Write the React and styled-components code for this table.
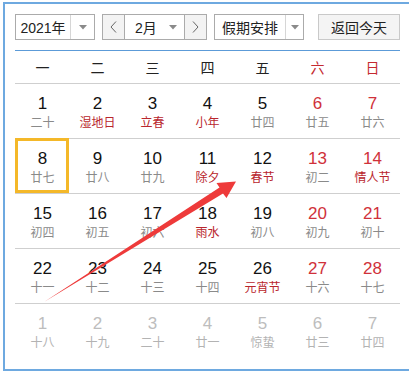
import React from 'react'
import styled, { createGlobalStyle } from 'styled-components'

const GlobalStyle = createGlobalStyle`
    body {
        margin: 0;
        background: #fff;
        overflow: hidden;
        font-family: "Liberation Sans", "Noto Sans CJK SC", sans-serif;
    }
`

const weekdays = ['一', '二', '三', '四', '五', '六', '日']

const weeks = [
    [['1', '二十'], ['2', '湿地日', 1], ['3', '立春', 1], ['4', '小年', 1], ['5', '廿四'], ['6', '廿五'], ['7', '廿六']],
    [['8', '廿七'], ['9', '廿八'], ['10', '廿九'], ['11', '除夕', 1], ['12', '春节', 1], ['13', '初二'], ['14', '情人节', 1]],
    [['15', '初四'], ['16', '初五'], ['17', '初六'], ['18', '雨水', 1], ['19', '初八'], ['20', '初九'], ['21', '初十']],
    [['22', '十一'], ['23', '十二'], ['24', '十三'], ['25', '十四'], ['26', '元宵节', 1], ['27', '十六'], ['28', '十七']],
    [['1', '十八'], ['2', '十九'], ['3', '二十'], ['4', '廿一'], ['5', '惊蛰'], ['6', '廿三'], ['7', '廿四']],
]

function Caret() {
    return (
        <svg width="8" height="5" viewBox="0 0 8 5">
            <path d="M0 0 L8 0 L4 4.5 Z" fill="#8a8a8a" />
        </svg>
    )
}

function Chevron({ dir }) {
    return (
        <svg width="7" height="12" viewBox="0 0 7 12">
            <path d={dir === 'left' ? 'M6 0.5 L1 6 L6 11.5' : 'M1 0.5 L6 6 L1 11.5'} fill="none" stroke="#666" strokeWidth="1" />
        </svg>
    )
}

function App() {
    return (
        <>
            <GlobalStyle />
            <Frame>
                <Toolbar>
                    <Select>
                        <SelectText $w={54}>2021年</SelectText>
                        <CaretBox $w={24} $divider>
                            <Caret />
                        </CaretBox>
                    </Select>
                    <Select>
                        <StepButton><Chevron dir="left" /></StepButton>
                        <SelectText $w={37} $left>2月</SelectText>
                        <CaretBox $w={22}>
                            <Caret />
                        </CaretBox>
                        <StepButton $right><Chevron dir="right" /></StepButton>
                    </Select>
                    <Select>
                        <SelectText $w={70}>假期安排</SelectText>
                        <CaretBox $w={18} $divider>
                            <Caret />
                        </CaretBox>
                    </Select>
                    <TodayButton>返回今天</TodayButton>
                </Toolbar>
                <Calendar>
                    <WeekHeader>
                        {weekdays.map((d, i) => (
                            <WeekDay key={d} $weekend={i > 4}>{d}</WeekDay>
                        ))}
                    </WeekHeader>
                    {weeks.map((week, r) => (
                        <WeekRow key={r} $last={r === weeks.length - 1}>
                            {week.map(([num, lunar, fest], c) => (
                                <DayCell key={c} $selected={r === 1 && c === 0}>
                                    <DayNum $weekend={c > 4} $other={r === 4}>{num}</DayNum>
                                    <Lunar $fest={fest} $other={r === 4}>{lunar}</Lunar>
                                </DayCell>
                            ))}
                        </WeekRow>
                    ))}
                </Calendar>
                <Arrow viewBox="0 0 409 373" width="409" height="373">
                    <polygon
                        points="44,302 219.5,187.5 216.5,183 236,181.5 226.5,198 223,193.5"
                        fill="#ee3a3a"
                    />
                </Arrow>
            </Frame>
        </>
    )
}

const Frame = styled.div`
    position: relative;
    margin: 2px 0 0 3px;
    width: 406px;
    border: 2px solid #6ea9e0;
    border-right: none;
    padding: 10px 0 10px 10px;
    box-sizing: border-box;
    height: 369px;
`

const Toolbar = styled.div`
    display: flex;
    align-items: center;
    height: 26px;
    gap: 7px;
    & > :last-child {
        margin-left: 7px;
    }
`

const Select = styled.div`
    display: flex;
    height: 26px;
    border: 1px solid #ababab;
    box-sizing: border-box;
    background: #fff;
`

const SelectText = styled.div`
    width: ${p => p.$w}px;
    display: flex;
    align-items: center;
    justify-content: ${p => (p.$left ? 'flex-start' : 'center')};
    padding-left: ${p => (p.$left ? '10px' : '0')};
    box-sizing: border-box;
    font-size: 14px;
    color: #222;
`

const CaretBox = styled.div`
    width: ${p => p.$w}px;
    box-sizing: border-box;
    display: flex;
    align-items: center;
    justify-content: center;
    border-left: ${p => (p.$divider ? '1px solid #d6d6d6' : 'none')};
`

const StepButton = styled.div`
    width: 22px;
    box-sizing: border-box;
    display: flex;
    align-items: center;
    justify-content: center;
    background: #f3f3f3;
    border-right: ${p => (p.$right ? 'none' : '1px solid #ababab')};
    border-left: ${p => (p.$right ? '1px solid #ababab' : 'none')};
`

const TodayButton = styled.div`
    width: 82px;
    height: 26px;
    box-sizing: border-box;
    border: 1px solid #c9c9c9;
    background: #f4f4f4;
    display: flex;
    align-items: center;
    justify-content: center;
    font-size: 14px;
    color: #222;
`

const Calendar = styled.div`
    width: 385px;
    margin-top: 10px;
    border-top: 1px solid #5c9bd8;
`

const WeekHeader = styled.div`
    display: grid;
    grid-template-columns: repeat(7, 55px);
    height: 32px;
    align-items: center;
    border-bottom: 1px solid #cfcfcf;
`

const WeekDay = styled.div`
    text-align: center;
    font-size: 14px;
    color: ${p => (p.$weekend ? '#c42a30' : '#222')};
`

const WeekRow = styled.div`
    display: grid;
    grid-template-columns: repeat(7, 55px);
    height: 55px;
    box-sizing: border-box;
    border-bottom: ${p => (p.$last ? 'none' : '1px solid #cfcfcf')};
`

const DayCell = styled.div`
    position: relative;
    display: flex;
    flex-direction: column;
    align-items: center;
    padding-top: 10px;
    box-sizing: border-box;
    &::after {
        content: '';
        display: ${p => (p.$selected ? 'block' : 'none')};
        position: absolute;
        top: -1px;
        left: 0;
        right: 1px;
        bottom: 0;
        border: 3px solid #f4b829;
    }
`

const DayNum = styled.div`
    font-family: "Liberation Sans", sans-serif;
    font-size: 17px;
    line-height: 20px;
    color: ${p => (p.$other ? '#bdbdbd' : p.$weekend ? '#d0313a' : '#111')};
`

const Lunar = styled.div`
    font-size: 12px;
    line-height: 16px;
    margin-top: 1px;
    color: ${p => (p.$other ? '#b3b3b3' : p.$fest ? '#b9262d' : '#8a8a8a')};
`

const Arrow = styled.svg`
    position: absolute;
    left: -5px;
    top: -4px;
    pointer-events: none;
`

export default App
